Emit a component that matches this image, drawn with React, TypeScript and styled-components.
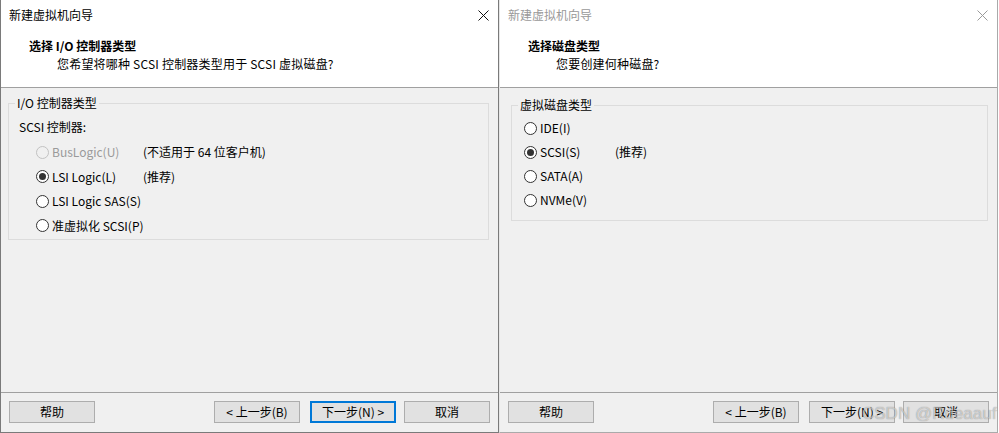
import React from 'react';
import styled, { createGlobalStyle, css } from 'styled-components';

const GlobalStyle = createGlobalStyle`
  html, body {
    margin: 0;
    padding: 0;
    background: #ffffff;
  }
  body {
    font-family: "Noto Sans CJK SC", "Noto Sans", sans-serif;
    font-size: 12px;
    color: #000;
  }
`;

const Page = styled.div`
  position: relative;
  display: flex;
  width: 999px;
  height: 433px;
  background: #fff;
  overflow: hidden;
`;

const Dialog = styled.section<{ $active?: boolean }>`
  display: flex;
  flex-direction: column;
  width: 499px;
  height: 433px;
  box-sizing: border-box;
  background: #f0f0f0;
  border: 1px solid ${(p) => (p.$active ? '#7a7a7a' : '#aaaaaa')};
  border-top: none;
  ${(p) =>
    !p.$active &&
    css`
      border-left-color: #e6e6e6;
    `}
`;

const TitleBar = styled.div<{ $active?: boolean }>`
  display: flex;
  align-items: center;
  justify-content: space-between;
  height: 30px;
  padding: 0 9px 0 8px;
  background: #fff;
  line-height: 16px;
  color: ${(p) => (p.$active ? '#000' : '#999')};
`;

const CloseIcon = ({ color }: { color: string }) => (
  <svg width="11" height="11" viewBox="0 0 11 11">
    <path d="M0.5 0.5 L10.5 10.5 M10.5 0.5 L0.5 10.5" stroke={color} strokeWidth="1" fill="none" />
  </svg>
);

const Header = styled.header`
  height: 58px;
  box-sizing: border-box;
  padding: 8px 0 0 28px;
  background: #fff;
  border-bottom: 1px solid #a0a0a0;
`;

const HeaderTitle = styled.div`
  font-weight: 700;
  line-height: 16px;
`;

const HeaderText = styled.div`
  margin-top: 2px;
  padding-left: 28px;
  line-height: 16px;
  letter-spacing: 0.2px;
`;

const Body = styled.div<{ $top: number; $inset: number }>`
  flex: 1;
  padding: ${(p) => p.$top}px 9px 0 ${(p) => p.$inset}px;
`;

const GroupBox = styled.fieldset<{ $bottom: number }>`
  margin: 0;
  min-width: 0;
  padding: 0 0 ${(p) => p.$bottom}px 6px;
  border: 1px solid #dcdcdc;
`;

const Legend = styled.legend`
  padding: 0 2px;
  line-height: 16px;
`;

const FieldLabel = styled.div`
  margin-top: 8px;
  padding-left: 4px;
  line-height: 16px;
`;

const RadioList = styled.div<{ $top: number }>`
  margin-top: ${(p) => p.$top}px;
`;

const Row = styled.div<{ $height: number; $indent: number; $col: number }>`
  display: grid;
  grid-template-columns: ${(p) => p.$col}px auto;
  align-items: center;
  height: ${(p) => p.$height}px;
  padding-left: ${(p) => p.$indent}px;
  line-height: 16px;
  white-space: nowrap;
`;

const RadioLabel = styled.label<{ $disabled?: boolean }>`
  display: inline-flex;
  align-items: center;
  gap: 3px;
  white-space: nowrap;
  color: ${(p) => (p.$disabled ? '#9a9a9a' : '#000')};
`;

const Circle = styled.span<{ $checked?: boolean; $disabled?: boolean }>`
  position: relative;
  flex: none;
  display: inline-block;
  width: 13px;
  height: 13px;
  box-sizing: border-box;
  border-radius: 50%;
  border: 1px solid ${(p) => (p.$disabled ? '#c2c2c2' : '#333')};
  background: ${(p) => (p.$disabled ? '#f0f0f0' : '#fff')};
  ${(p) =>
    p.$checked &&
    css`
      &::after {
        content: '';
        position: absolute;
        left: 2px;
        top: 2px;
        width: 7px;
        height: 7px;
        border-radius: 50%;
        background: #333;
      }
    `}
`;

const Note = styled.span`
  white-space: nowrap;
`;

const Footer = styled.footer`
  display: flex;
  align-items: flex-start;
  height: 40px;
  box-sizing: border-box;
  padding: 8px 8px 0;
  border-top: 1px solid #a0a0a0;
`;

const Button = styled.button<{ $focused?: boolean; $gap?: number; $push?: boolean }>`
  width: 86px;
  height: 22px;
  box-sizing: border-box;
  padding: 0;
  margin-left: ${(p) => (p.$push ? 'auto' : `${p.$gap ?? 0}px`)};
  font-family: inherit;
  font-size: 12px;
  line-height: 16px;
  color: #000;
  white-space: nowrap;
  background: #e1e1e1;
  border: ${(p) => (p.$focused ? '2px solid #0078d7' : '1px solid #adadad')};
`;

const Watermark = styled.div`
  position: absolute;
  left: 862px;
  top: 404px;
  font-family: "Liberation Sans", Arial, sans-serif;
  font-size: 17px;
  line-height: 20px;
  white-space: nowrap;
  color: rgba(255, 255, 255, 0.55);
  text-shadow: 0 0 1px rgba(0, 0, 0, 0.45);
  pointer-events: none;
`;

type Option = { label: string; checked?: boolean; disabled?: boolean; note?: string };

const scsiOptions: Option[] = [
  { label: 'BusLogic(U)', disabled: true, note: '(不适用于 64 位客户机)' },
  { label: 'LSI Logic(L)', checked: true, note: '(推荐)' },
  { label: 'LSI Logic SAS(S)' },
  { label: '准虚拟化 SCSI(P)' },
];

const diskOptions: Option[] = [
  { label: 'IDE(I)' },
  { label: 'SCSI(S)', checked: true, note: '(推荐)' },
  { label: 'SATA(A)' },
  { label: 'NVMe(V)' },
];

const Options = ({
  items,
  height,
  indent,
  col,
}: {
  items: Option[];
  height: number;
  indent: number;
  col: number;
}) => (
  <>
    {items.map((o) => (
      <Row key={o.label} $height={height} $indent={indent} $col={col}>
        <RadioLabel $disabled={o.disabled}>
          <Circle $checked={o.checked} $disabled={o.disabled} />
          {o.label}
        </RadioLabel>
        {o.note && <Note>{o.note}</Note>}
      </Row>
    ))}
  </>
);

const Buttons = ({ active }: { active?: boolean }) => (
  <Footer>
    <Button>帮助</Button>
    <Button $push>&lt; 上一步(B)</Button>
    <Button $gap={10} $focused={active}>
      下一步(N) &gt;
    </Button>
    <Button $gap={8}>取消</Button>
  </Footer>
);

export default function App() {
  return (
    <>
      <GlobalStyle />
      <Page>
        <Dialog $active>
          <TitleBar $active>
            <span>新建虚拟机向导</span>
            <CloseIcon color="#111" />
          </TitleBar>
          <Header>
            <HeaderTitle>选择 I/O 控制器类型</HeaderTitle>
            <HeaderText>您希望将哪种 SCSI 控制器类型用于 SCSI 虚拟磁盘?</HeaderText>
          </Header>
          <Body $top={7} $inset={7}>
            <GroupBox $bottom={1}>
              <Legend>I/O 控制器类型</Legend>
              <FieldLabel>SCSI 控制器:</FieldLabel>
              <RadioList $top={5}>
                <Options items={scsiOptions} height={24.5} indent={21} col={107} />
              </RadioList>
            </GroupBox>
          </Body>
          <Buttons active />
        </Dialog>
        <Dialog>
          <TitleBar>
            <span>新建虚拟机向导</span>
            <CloseIcon color="#9a9a9a" />
          </TitleBar>
          <Header>
            <HeaderTitle>选择磁盘类型</HeaderTitle>
            <HeaderText>您要创建何种磁盘?</HeaderText>
          </Header>
          <Body $top={9} $inset={11}>
            <GroupBox $bottom={8}>
              <Legend>虚拟磁盘类型</Legend>
              <RadioList $top={3}>
                <Options items={diskOptions} height={24} indent={6} col={91} />
              </RadioList>
            </GroupBox>
          </Body>
          <Buttons />
        </Dialog>
        <Watermark>CSDN @Rdeaauf</Watermark>
      </Page>
    </>
  );
}
